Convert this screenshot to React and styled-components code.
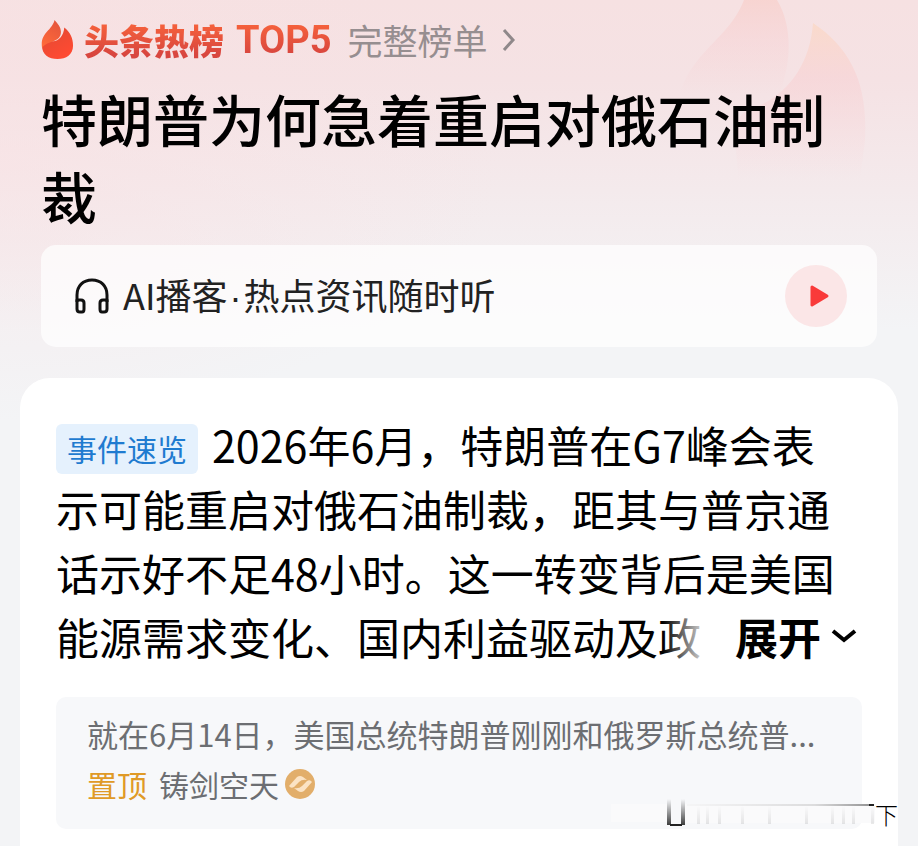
import styled, { createGlobalStyle } from 'styled-components'

const GlobalStyle = createGlobalStyle`
    * {
        box-sizing: border-box;
    }

    body {
        margin: 0;
        background: #f3f4f6;
        font-family: 'Noto Sans CJK SC', 'Noto Sans', sans-serif;
        color: #000;
    }

    h1, p {
        margin: 0;
    }

    button {
        border: none;
        padding: 0;
        font-family: inherit;
        cursor: pointer;
    }
`

const Page = styled.div`
    position: relative;
    display: flex;
    flex-direction: column;
    min-height: 100vh;
    overflow: hidden;
    padding: 0 20px;
    background:
        radial-gradient(500px 260px at 0 160px, rgba(249, 226, 228, 0.6), rgba(249, 226, 228, 0)),
        linear-gradient(#f6e1e2 0, #f5e2e4 80px, #f4eaec 190px, #f3f4f6 330px);
`

const Backdrop = styled.svg`
    position: absolute;
    top: 0;
    right: 40px;
`

const Hero = styled.header`
    position: relative;
    padding: 6px 21px 31px;
`

const RankBar = styled.div`
    display: flex;
    align-items: center;
    height: 68px;
`

const RankName = styled.span`
    display: flex;
    align-items: center;
    gap: 12px;
    margin-left: 10px;
    font-size: 35px;
    font-weight: 900;
    line-height: 48px;
    background: linear-gradient(#f4603c 20%, #d8463f 80%);
    background-clip: text;
    color: transparent;
`

const RankNumber = styled.span`
    font-family: Roboto, sans-serif;
    font-size: 38px;
    font-weight: 700;
`

const FullList = styled.a`
    display: flex;
    align-items: center;
    gap: 14px;
    margin-left: 16px;
    font-size: 35px;
    font-weight: 400;
    line-height: 48px;
    color: #968e90;
    text-decoration: none;
`

const Title = styled.h1`
    margin-top: 5px;
    font-size: 56px;
    font-weight: 500;
    line-height: 77px;
`

const Podcast = styled.section`
    display: flex;
    align-items: center;
    gap: 14px;
    height: 102px;
    margin-top: 12px;
    padding: 0 30px 0 34px;
    border-radius: 15px;
    background: rgba(255, 255, 255, 0.7);
    font-size: 36px;
    line-height: 50px;
    color: #222;
`

const Dot = styled.span`
    font-family: 'Liberation Sans', sans-serif;
    margin: 0 2px;
`

const PlayButton = styled.button`
    display: flex;
    align-items: center;
    justify-content: center;
    width: 62px;
    height: 62px;
    margin-left: auto;
    padding-left: 5px;
    border-radius: 50%;
    background: #fbe6e7;
`

const Card = styled.main`
    position: relative;
    flex: 1;
    padding: 34px 36px 18px;
    border-radius: 30px 30px 0 0;
    background: #fff;
`

const Summary = styled.div`
    position: relative;
    height: 256px;
    overflow: hidden;
    font-size: 43px;
    line-height: 64px;
`

const SummaryText = styled.p`
    padding-right: 20px;
`

const Tag = styled.span`
    display: inline-block;
    margin-right: 14px;
    padding: 0 11px 2px;
    border-radius: 6px;
    background: #e5f1fd;
    font-size: 30px;
    line-height: 48px;
    vertical-align: 2px;
    color: #1f7bd0;
`

const Expand = styled.button`
    position: absolute;
    right: 0;
    bottom: 0;
    display: flex;
    align-items: center;
    gap: 10px;
    height: 64px;
    padding: 0 5px 0 72px;
    background: linear-gradient(90deg, rgba(255, 255, 255, 0), #fff 48px);
    font-size: 43px;
    font-weight: 700;
    line-height: 64px;
    color: #000;
`

const Quote = styled.section`
    margin-top: 29px;
    padding: 11px 31px 19px;
    border-radius: 10px;
    background: #f7f8fa;
    font-size: 31px;
    line-height: 51px;
    color: #6c6e72;
`

const QuoteText = styled.p`
    white-space: nowrap;
`

const Author = styled.div`
    display: flex;
    align-items: center;
    font-size: 30px;
`

const Pinned = styled.span`
    margin-right: 12px;
    color: #e09a26;
`

const Badge = styled.svg`
    margin-left: 6px;
`

const Watermark = styled.div`
    position: absolute;
    right: 0;
    bottom: 18px;
    display: flex;
    align-items: center;
    font-size: 23px;
    font-weight: 300;
    line-height: 30px;
`

const FlameIcon = () => (
    <svg width="33" height="40" viewBox="0 0 34 42" preserveAspectRatio="none" aria-hidden="true">
        <defs>
            <linearGradient id="flameBody" x1="0" y1="0" x2="0.6" y2="1">
                <stop offset="0" stopColor="#e04a33" />
                <stop offset="1" stopColor="#ff4a32" />
            </linearGradient>
            <linearGradient id="flameTongue" x1="0.7" y1="0" x2="0.2" y2="1">
                <stop offset="0" stopColor="#e5553c" />
                <stop offset="1" stopColor="#ff6a3a" />
            </linearGradient>
        </defs>
        <path d="M24 8C30 13 33 19 33 27C33 36 26 41 17 41C8 41 1 36 1 27L6 20C14 26 23 20 24 8Z" fill="url(#flameBody)" />
        <path d="M14 0C18 5 22 9 20 16C17 24 8 21 1 29C-1 13 11 12 14 0Z" fill="url(#flameTongue)" />
    </svg>
)

const BackdropFlame = () => (
    <Backdrop width="200" height="220" viewBox="0 0 200 220" aria-hidden="true">
        <defs>
            <linearGradient id="fadeLeft" x1="0" y1="0" x2="0" y2="1">
                <stop offset="0" stopColor="#f8cfca" stopOpacity="0.7" />
                <stop offset="0.4" stopColor="#f7d0d2" stopOpacity="0.4" />
                <stop offset="0.9" stopColor="#f7d0d2" stopOpacity="0" />
            </linearGradient>
            <linearGradient id="fadeRight" x1="0" y1="0" x2="0" y2="1">
                <stop offset="0" stopColor="#fbd8c4" stopOpacity="0.75" />
                <stop offset="0.35" stopColor="#f8d0d2" stopOpacity="0.55" />
                <stop offset="1" stopColor="#f8d4d8" stopOpacity="0" />
            </linearGradient>
        </defs>
        <path d="M66 0C56 26 36 40 20 60C8 75 2 88 0 105H96C114 70 116 28 99 0Z" fill="url(#fadeLeft)" />
        <path d="M135 23C172 48 190 82 187 140L182 180H60C60 150 50 120 70 110C108 98 132 66 135 23Z" fill="url(#fadeRight)" />
    </Backdrop>
)

const HeadphonesIcon = () => (
    <svg width="34" height="36" viewBox="0 0 34 36" fill="none" stroke="#111" strokeWidth="3" strokeLinejoin="round" aria-hidden="true">
        <path d="M2 24V17C2 8 8 2 17 2C26 2 32 8 32 17V24" />
        <path d="M2 22H6Q9 22 9 25V31Q9 34 7 34H5Q2 34 2 31Z" />
        <path d="M32 22H28Q25 22 25 25V31Q25 34 27 34H29Q32 34 32 31Z" />
    </svg>
)

// stretched strokes running into the last glyph
const STREAKS = [27, 36, 48, 71, 98, 135, 161, 172, 182, 201]

const Streaks = () => (
    <svg width="264" height="30" viewBox="0 0 264 30" aria-hidden="true">
        <defs>
            <linearGradient id="streakLine" x1="0" x2="1">
                <stop offset="0" stopColor="#000" stopOpacity="0.02" />
                <stop offset="0.7" stopColor="#000" stopOpacity="0.12" />
                <stop offset="1" stopColor="#000" stopOpacity="0.4" />
            </linearGradient>
            <linearGradient id="streakFall" x1="0" x2="0" y1="0" y2="1">
                <stop offset="0" stopColor="#000" stopOpacity="0" />
                <stop offset="1" stopColor="#000" stopOpacity="0.75" />
            </linearGradient>
        </defs>
        <rect y="5" width="56" height="18" fill="#fafafb" />
        <rect x="74" y="5" width="190" height="19" fill="#fafafb" />
        <rect x="56" y="0" width="4" height="26" fill="url(#streakFall)" />
        <rect x="70" y="0" width="4" height="26" fill="url(#streakFall)" />
        <rect x="59" y="25" width="12" height="2" fill="#222" />
        <rect x="76" y="5" width="182" height="2" fill="url(#streakLine)" />
        <rect x="258" y="5" width="5" height="2" fill="#222" />
        {STREAKS.map((x) => (
            <rect key={x} x={x + 59} y="7" width="3" height="18" fill="url(#streakFall)" opacity="0.12" />
        ))}
    </svg>
)

const App = () => {
    return (
        <Page lang="zh-CN">
            <GlobalStyle />
            <BackdropFlame />
            <Hero>
                <RankBar>
                    <FlameIcon />
                    <RankName>头条热榜<RankNumber>TOP5</RankNumber></RankName>
                    <FullList href="#list">
                        完整榜单
                        <svg width="14" height="24" viewBox="0 0 14 24" fill="none" stroke="#8f888a" strokeWidth="3" aria-hidden="true">
                            <path d="M2 2L11 12L2 22" />
                        </svg>
                    </FullList>
                </RankBar>
                <Title>特朗普为何急着重启对俄石油制裁</Title>
                <Podcast>
                    <HeadphonesIcon />
                    <span>AI播客<Dot>·</Dot>热点资讯随时听</span>
                    <PlayButton aria-label="播放">
                        <svg width="22" height="24" viewBox="0 0 22 24" aria-hidden="true">
                            <path d="M4 3L19 12L4 21Z" fill="#f93a3a" stroke="#f93a3a" strokeWidth="3" strokeLinejoin="round" />
                        </svg>
                    </PlayButton>
                </Podcast>
            </Hero>
            <Card>
                <Summary>
                    <SummaryText>
                        <Tag>事件速览</Tag>
                        2026年6月，特朗普在G7峰会表示可能重启对俄石油制裁，距其与普京通话示好不足48小时。这一转变背后是美国能源需求变化、国内利益驱动及政
                    </SummaryText>
                    <Expand>
                        展开
                        <svg width="26" height="16" viewBox="0 0 26 16" fill="none" stroke="#000" strokeWidth="4" aria-hidden="true">
                            <path d="M2 3L13 12L24 3" />
                        </svg>
                    </Expand>
                </Summary>
                <Quote>
                    <QuoteText>就在6月14日，美国总统特朗普刚刚和俄罗斯总统普...</QuoteText>
                    <Author>
                        <Pinned>置顶</Pinned>
                        铸剑空天
                        <Badge width="31" height="31" viewBox="0 0 31 31" aria-hidden="true">
                            <circle cx="15" cy="15" r="15" fill="#e2ae6a" />
                            <path d="M4 17L12 8Q15 6 18 8L22 11Q17 10 14 13L9 18Q6 20 4 17Z" fill="#fbe3c4" />
                            <path d="M27 13L19 22Q16 24 13 22L9 19Q14 20 17 17L22 12Q25 10 27 13Z" fill="#fbe3c4" />
                        </Badge>
                    </Author>
                </Quote>
                <Watermark><Streaks />下</Watermark>
            </Card>
        </Page>
    )
}

export default App
